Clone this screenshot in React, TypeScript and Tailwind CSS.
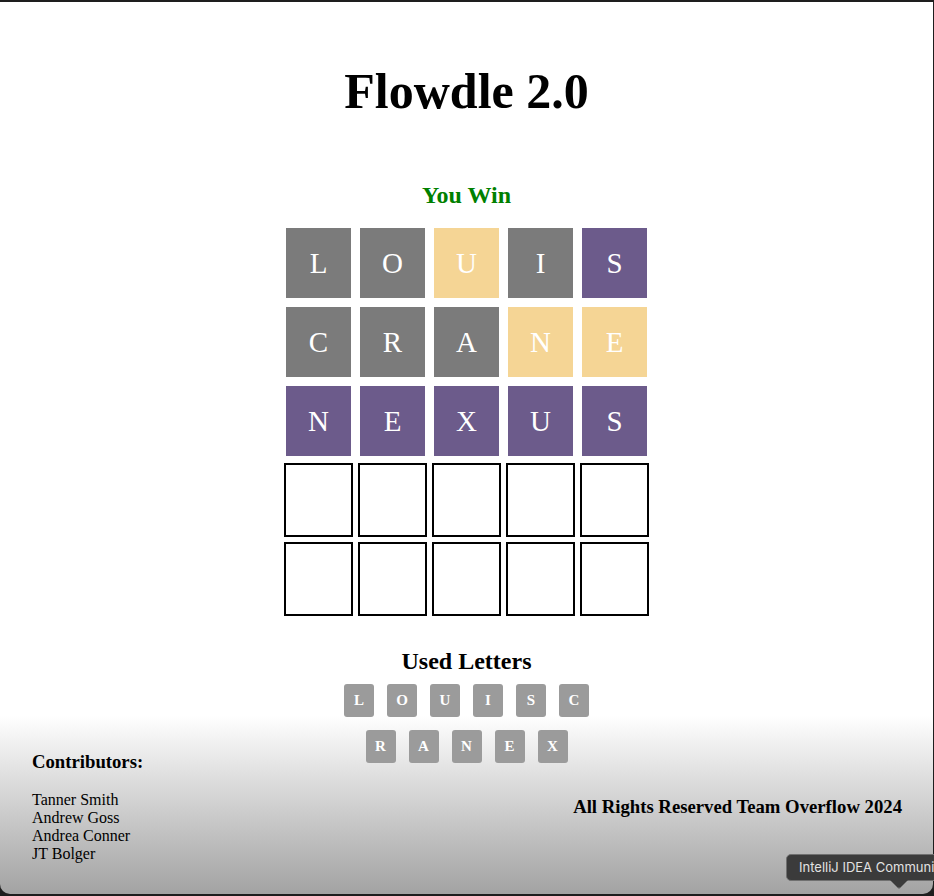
const ROWS: { word: string; marks: string }[] = [
  { word: 'LOUIS', marks: 'ggygp' },
  { word: 'CRANE', marks: 'gggyy' },
  { word: 'NEXUS', marks: 'ppppp' },
  { word: '', marks: '' },
  { word: '', marks: '' },
];

const USED = ['L', 'O', 'U', 'I', 'S', 'C', 'R', 'A', 'N', 'E', 'X'];

const CONTRIBUTORS = ['Tanner Smith', 'Andrew Goss', 'Andrea Conner', 'JT Bolger'];

const tileColor: Record<string, string> = {
  g: 'bg-[#7b7b7b]',
  y: 'bg-[#f5d595]',
  p: 'bg-[#6c5b8b]',
};

function Tile({ letter, mark }: { letter?: string; mark?: string }) {
  if (!letter) {
    return <div className="w-[69px] h-[74px] border-2 border-black" />;
  }
  return (
    <div
      className={`w-[69px] h-[74px] border-2 border-white flex items-center justify-center text-white text-[29px] leading-none ${tileColor[mark ?? 'g']}`}
    >
      {letter}
    </div>
  );
}

function Board() {
  return (
    <div className="mt-[19px] flex flex-col gap-[5px]">
      {ROWS.map((row, r) => (
        <div key={r} className="flex gap-[5px]">
          {[0, 1, 2, 3, 4].map((c) => (
            <Tile key={c} letter={row.word[c]} mark={row.marks[c]} />
          ))}
        </div>
      ))}
    </div>
  );
}

function UsedLetters() {
  return (
    <>
      <h2 className="mt-[33px] text-[24px] leading-[24px] font-bold">Used Letters</h2>
      <div className="mt-[11px] w-[260px] flex flex-wrap justify-center gap-x-[13px] gap-y-[13px]">
        {USED.map((l) => (
          <div
            key={l}
            className="w-[30px] h-[33px] rounded-[3px] bg-[#9b9b9b] text-white text-[15px] font-bold flex items-center justify-center"
          >
            {l}
          </div>
        ))}
      </div>
    </>
  );
}

function Footer() {
  return (
    <footer className="absolute bottom-0 left-0 right-0 pl-[32px] pr-[31px] pb-[31px] flex items-center justify-between">
      <div>
        <h3 className="text-[18.72px] leading-[22px] font-bold">Contributors:</h3>
        <div className="mt-[18px] text-[16px] leading-[18px]">
          {CONTRIBUTORS.map((n) => (
            <div key={n}>{n}</div>
          ))}
        </div>
      </div>
      <h3 className="text-[18.72px] leading-[22px] font-bold">All Rights Reserved Team Overflow 2024</h3>
    </footer>
  );
}

function IdeTooltip() {
  return (
    <div className="absolute left-[786px] top-[854px] w-[220px]">
      <div className="h-[27px] rounded-[5px] border border-[#707070] bg-[#3b3b3b] pl-[12px] flex items-center font-['Inter',sans-serif] text-[13px] text-[#e2e2e2] whitespace-nowrap">
        IntelliJ IDEA Community Edition
      </div>
      <svg className="absolute left-[104px] top-[25px]" width="18" height="10" viewBox="0 0 18 10">
        <path d="M0 1 L7.5 8.5 Q9 10 10.5 8.5 L18 1" fill="#3b3b3b" stroke="#707070" strokeWidth="1" />
        <rect x="0" y="0" width="18" height="1.5" fill="#3b3b3b" />
      </svg>
    </div>
  );
}

export default function App() {
  return (
    <div className="relative w-full h-[896px] overflow-hidden bg-[#1e1e1e] pt-[2px] pr-[1px] pb-[2px]">
      <div className="relative h-full rounded-b-[10px] overflow-hidden bg-linear-to-b from-white from-80% to-[#a3a3a3] text-black font-['Liberation_Serif',serif]">
        <main className="flex flex-col items-center">
          <h1 className="mt-[64px] text-[50px] leading-[50px] font-bold">Flowdle 2.0</h1>
          <h2 className="mt-[67px] text-[24px] leading-[24px] font-bold text-[#008000]">You Win</h2>
          <Board />
          <UsedLetters />
        </main>
        <Footer />
      </div>
      <IdeTooltip />
    </div>
  );
}
